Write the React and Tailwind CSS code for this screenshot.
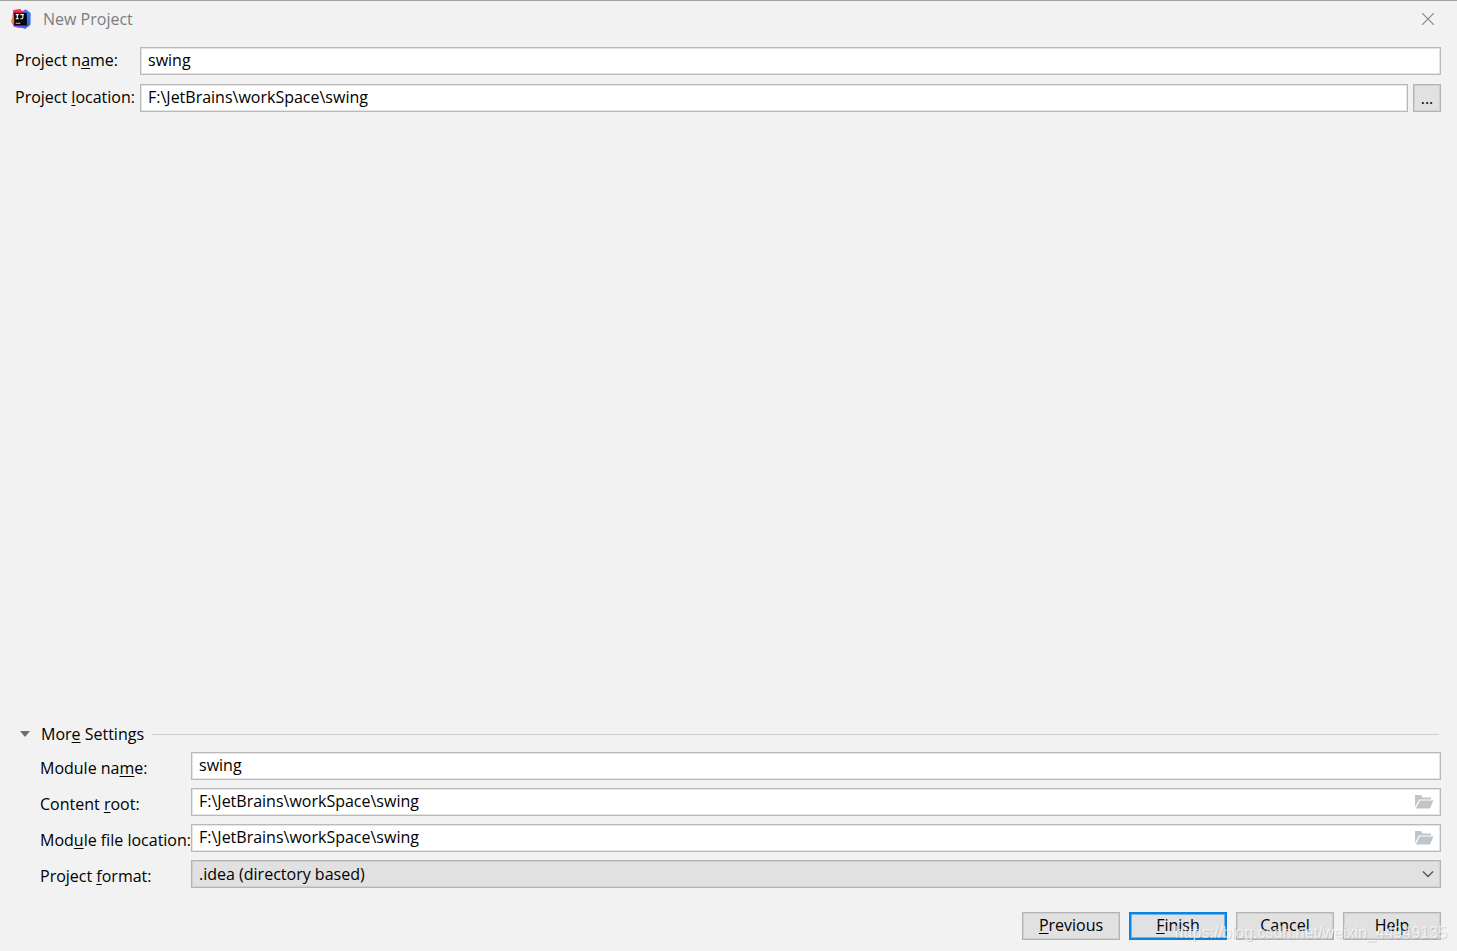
// src/components/NewProjectDialog.jsx
import React, { useState } from "react";

const fieldClass =
  "h-7 w-full min-w-0 border border-[#b9b9b9] bg-white px-[7px] pb-0.5 text-black outline-1 -outline-offset-2 outline-[#e4e4e4]";
const buttonClass = "h-7 w-[98px] bg-[#e1e1e1] pb-0.5 leading-5 text-black";
const plainBorder = "border border-[#b4b4b4] outline-1 -outline-offset-2 outline-[#cfcfcf]";

// text with its mnemonic letter underlined
function Mnemonic({ text, at }) {
  return (
    <>
      {text.slice(0, at)}
      <span className="underline underline-offset-2">{text[at]}</span>
      {text.slice(at + 1)}
    </>
  );
}

function AppLogo() {
  return (
    <svg viewBox="0 0 64 64" className="h-5 w-5" aria-hidden="true">
      <defs>
        <linearGradient id="cold" x1="0" y1="0" x2="0.6" y2="1">
          <stop offset="0" stopColor="#6b57ff" />
          <stop offset="0.5" stopColor="#3b7df0" />
          <stop offset="1" stopColor="#2c5fe0" />
        </linearGradient>
        <linearGradient id="warm" x1="0" y1="0" x2="0" y2="1">
          <stop offset="0.3" stopColor="#fe2857" />
          <stop offset="0.5" stopColor="#fc801d" />
          <stop offset="0.7" stopColor="#fc801d" />
          <stop offset="0.85" stopColor="#b74af7" />
        </linearGradient>
      </defs>
      <path d="M34 8 47 1l16 12-1 37-16 13-22-8z" fill="url(#cold)" />
      <path d="M7 3 29 0l12 13-8 40-10 5-15-3L0 39l5-14z" fill="url(#warm)" />
      <path d="M9 48h22l6 8-10 5-18-4z" fill="#a846e8" />
      <path d="M28 52h22l-4 11-20-5z" fill="#5a5cf5" />
      <path d="M10 12h41v41H10z" fill="#08080b" />
      <path
        d="M15 18h10M20 18v13M15 31h10M30 18h11M38 18v9q0 4-4 4h-4"
        fill="none"
        stroke="#fff"
        strokeWidth="3.5"
      />
      <path d="M15 44h15v3H15z" fill="#ddd" />
    </svg>
  );
}

function FolderIcon() {
  return (
    <svg viewBox="0 0 20 16" className="h-4 w-5" fill="#bfc5c9" aria-hidden="true">
      <path d="M1 1h6l1.5 2.5H17v2H5L1 13z" />
      <path d="M5.8 6.5H19.5L16 14.5H1.8z" />
    </svg>
  );
}

function PathField({ id, value, onChange }) {
  return (
    <div className="relative">
      <input
        id={id}
        className={`${fieldClass} pr-8`}
        value={value}
        onChange={(e) => onChange(e.target.value)}
      />
      <button type="button" aria-label="Browse" className="absolute top-1.5 right-[7px]">
        <FolderIcon />
      </button>
    </div>
  );
}

export default function NewProjectDialog() {
  const [name, setName] = useState("swing");
  const [location, setLocation] = useState("F:\\JetBrains\\workSpace\\swing");
  const [moduleName, setModuleName] = useState("swing");
  const [contentRoot, setContentRoot] = useState("F:\\JetBrains\\workSpace\\swing");
  const [moduleFile, setModuleFile] = useState("F:\\JetBrains\\workSpace\\swing");
  const [open, setOpen] = useState(true);

  return (
    <div className="relative flex min-h-screen flex-col border-t border-[#a0a0a0] bg-[#f2f2f2] pr-4 pb-[11px] font-['Open_Sans',sans-serif] text-[16px] leading-5 text-black">
      {/* Title bar */}
      <header className="flex h-[46px] items-start pt-2 pl-[11px]">
        <AppLogo />
        <h1 className="ml-3 text-[#7c7c7c]">New Project</h1>
        <button type="button" aria-label="Close" className="mt-1 mr-[7px] ml-auto">
          <svg viewBox="0 0 12 12" className="h-3 w-3" stroke="#888" strokeWidth="1.2" fill="none" aria-hidden="true">
            <path d="M0 0 12 12M12 0 0 12" />
          </svg>
        </button>
      </header>

      {/* Project fields */}
      <div className="grid grid-cols-[125px_1fr] items-center gap-y-[9px] pl-[15px]">
        <label htmlFor="name" className="pb-0.5 whitespace-nowrap">
          <Mnemonic text="Project name:" at={9} />
        </label>
        <input id="name" className={fieldClass} value={name} onChange={(e) => setName(e.target.value)} />

        <label htmlFor="location" className="pb-0.5 whitespace-nowrap">
          <Mnemonic text="Project location:" at={8} />
        </label>
        <div className="flex gap-[5px]">
          <input
            id="location"
            className={fieldClass}
            value={location}
            onChange={(e) => setLocation(e.target.value)}
          />
          <button
            type="button"
            aria-label="Browse for location"
            className={`h-7 w-7 shrink-0 bg-[#e1e1e1] leading-5 ${plainBorder}`}
          >
            ...
          </button>
        </div>
      </div>

      {/* More settings */}
      <section className="mt-auto">
        <div className="mb-2 flex items-center pr-0.5 pl-5">
          <button
            type="button"
            aria-expanded={open}
            onClick={() => setOpen(!open)}
            className="flex items-center"
          >
            <svg viewBox="0 0 10 6" className="mr-[11px] h-1.5 w-2.5" fill="#6e6e6e" aria-hidden="true">
              <path d="M0 0h10L5 6z" />
            </svg>
            <span>
              <Mnemonic text="More Settings" at={3} />
            </span>
          </button>
          <div className="ml-2 h-px flex-1 bg-[#cdcdcd]" />
        </div>

        {open && (
          <div className="grid grid-cols-[151px_1fr] items-center gap-y-2 pl-10">
            <label htmlFor="module" className="pt-1 whitespace-nowrap">
              <Mnemonic text="Module name:" at={9} />
            </label>
            <input
              id="module"
              className={fieldClass}
              value={moduleName}
              onChange={(e) => setModuleName(e.target.value)}
            />

            <label htmlFor="root" className="pt-1 whitespace-nowrap">
              <Mnemonic text="Content root:" at={8} />
            </label>
            <PathField id="root" value={contentRoot} onChange={setContentRoot} />

            <label htmlFor="file" className="pt-1 whitespace-nowrap">
              <Mnemonic text="Module file location:" at={3} />
            </label>
            <PathField id="file" value={moduleFile} onChange={setModuleFile} />

            <label htmlFor="format" className="pt-1 whitespace-nowrap">
              <Mnemonic text="Project format:" at={8} />
            </label>
            <div className="relative">
              <select
                id="format"
                className={`block h-7 w-full appearance-none bg-[#e1e1e1] px-[7px] leading-5 ${plainBorder}`}
              >
                <option>.idea (directory based)</option>
              </select>
              <svg
                viewBox="0 0 12 12"
                className="pointer-events-none absolute top-2 right-[7px] h-3 w-3"
                fill="none"
                stroke="#555"
                strokeWidth="1.4"
                aria-hidden="true"
              >
                <path d="M1 3.5 6 8.5 11 3.5" />
              </svg>
            </div>
          </div>
        )}
      </section>

      {/* Buttons */}
      <footer className="mt-6 flex justify-end gap-[9px]">
        <button type="button" className={`${buttonClass} ${plainBorder}`}>
          <Mnemonic text="Previous" at={0} />
        </button>
        <button
          type="button"
          className={`${buttonClass} border-2 border-[#0a84de] outline-1 -outline-offset-3 outline-[#6fb4ea]`}
        >
          <Mnemonic text="Finish" at={0} />
        </button>
        <button type="button" className={`${buttonClass} ${plainBorder}`}>
          Cancel
        </button>
        <button type="button" className={`${buttonClass} ${plainBorder}`}>
          Help
        </button>
      </footer>

      <span className="pointer-events-none absolute right-2.5 bottom-2 font-['Liberation_Sans',sans-serif] text-[16px] text-white/70 [text-shadow:1px_1px_1px_rgba(0,0,0,0.15)]">
        https://blog.csdn.net/weixin_44949135
      </span>
    </div>
  );
}
